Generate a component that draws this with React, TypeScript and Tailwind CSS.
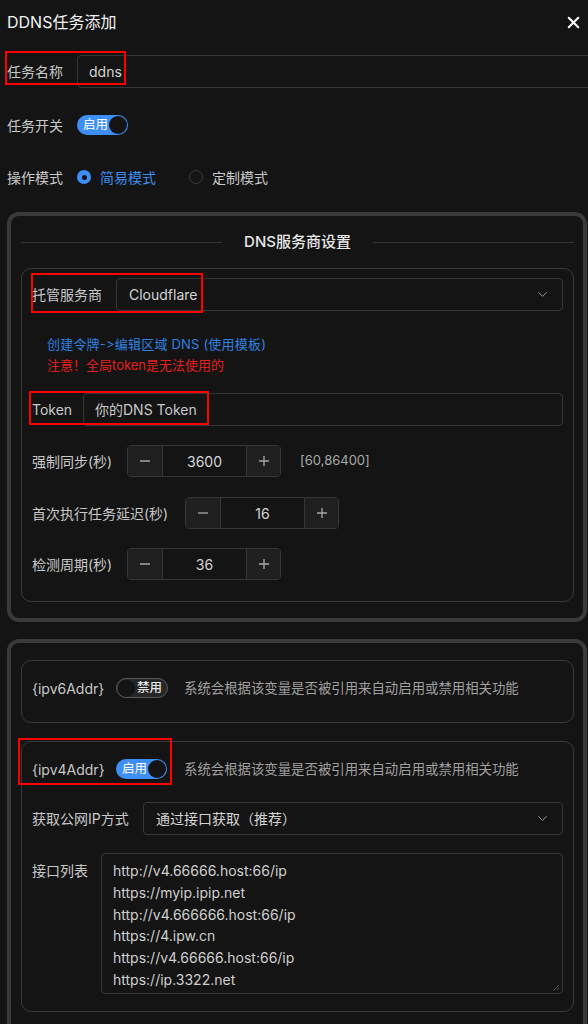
import { ChevronDown, X } from "lucide-react";

const font = "font-['Inter','Noto_Sans_CJK_SC',sans-serif]";

function Toggle({ on }: { on: boolean }) {
  if (on) {
    return (
      <div className="flex h-[20px] w-[51px] items-center justify-between rounded-full bg-[#3d8ff5] pl-[6px] pr-[1px]">
        <span className="text-[12.5px] leading-none text-white">启用</span>
        <span className="h-[18px] w-[18px] rounded-full bg-[#141414]" />
      </div>
    );
  }
  return (
    <div className="flex h-[20px] w-[52px] items-center justify-between rounded-full border border-[#5a5a5a] bg-[#262626] pl-[1px] pr-[5px]">
      <span className="h-[17px] w-[17px] rounded-full bg-[#141414]" />
      <span className="text-[12.5px] leading-none font-medium text-[#e6e6e6]">禁用</span>
    </div>
  );
}

function Stepper({ value }: { value: string }) {
  return (
    <div className="flex h-[32px] w-[154px] overflow-hidden rounded-[4px] border border-[#363636]">
      <div className="flex w-[34px] items-center justify-center bg-[#1f1f1f]">
        <svg width="12" height="12" viewBox="0 0 12 12">
          <path d="M1 6h10" stroke="#a8a8a8" strokeWidth="1.3" />
        </svg>
      </div>
      <div className="flex flex-1 items-center justify-center border-x border-[#363636] bg-[#141414] text-[14px] text-[#d4d4d4]">
        {value}
      </div>
      <div className="flex w-[33px] items-center justify-center bg-[#1f1f1f]">
        <svg width="12" height="12" viewBox="0 0 12 12">
          <path d="M1 6h10M6 1v10" stroke="#a8a8a8" strokeWidth="1.3" />
        </svg>
      </div>
    </div>
  );
}

function Select({ value }: { value: string }) {
  return (
    <div className="flex h-[33px] flex-1 items-center justify-between rounded-[4px] border border-[#363636] pl-[12px] pr-[12px]">
      <span className="text-[14px] text-[#d4d4d4]">{value}</span>
      <ChevronDown size={15} strokeWidth={1.5} color="#a0a0a0" />
    </div>
  );
}

const urls = [
  "http://v4.66666.host:66/ip",
  "https://myip.ipip.net",
  "http://v4.666666.host:66/ip",
  "https://4.ipw.cn",
  "https://v4.66666.host:66/ip",
  "https://ip.3322.net",
];

export default function App() {
  return (
    <div className={`relative h-[1024px] w-[588px] overflow-hidden bg-[#141414] text-[#c8c8c8] [font-feature-settings:'calt'_0] ${font}`}>
      {/* header */}
      <div className="flex h-[44px] items-center justify-between pl-[7px] pr-[5px]">
        <span className="text-[16px] text-[#f2f2f2]">DDNS任务添加</span>
        <X size={19} strokeWidth={2.6} color="#ffffff" />
      </div>

      <div className="mt-[11px] flex h-[33px] items-center pl-[7px]">
        <span className="w-[70px] text-[14px]">任务名称</span>
        <div className="-mr-[30px] flex h-full flex-1 items-center rounded-[4px] border border-[#363636] pl-[11px] text-[14px] text-[#d4d4d4]">
          ddns
        </div>
      </div>

      <div className="mt-[27px] flex h-[20px] items-center pl-[7px]">
        <span className="w-[70px] text-[14px]">任务开关</span>
        <Toggle on />
      </div>

      <div className="mt-[32px] flex h-[20px] items-center pl-[7px] text-[14px]">
        <span className="w-[70px]">操作模式</span>
        <span className="flex h-[14px] w-[14px] items-center justify-center rounded-full bg-[#3d8ff5]">
          <span className="h-[5px] w-[5px] rounded-full bg-[#141414]" />
        </span>
        <span className="ml-[9px] text-[#3d8ff5]">简易模式</span>
        <span className="ml-[33px] h-[14px] w-[14px] rounded-full border border-[#3a3a3a] bg-[#141414]" />
        <span className="ml-[9px]">定制模式</span>
      </div>

      {/* DNS provider panel */}
      <div className="ml-[7px] mr-[1px] mt-[25px] rounded-[12px] border-[4px] border-[#3a3a3a] pb-[16px] pl-[10px] pr-[9px]">
        <div className="flex h-[52px] items-center">
          <div className="h-px flex-1 bg-[#333333]" />
          <span className="px-[22px] text-[15px] font-medium text-[#e8e8e8]">DNS服务商设置</span>
          <div className="h-px flex-1 bg-[#333333]" />
        </div>
        <div className="rounded-[10px] border-[1.5px] border-[#3a3a3a] pb-[21px] pl-[10px] pr-[10px] pt-[9px]">
          <div className="flex items-center">
            <span className="w-[84px] text-[14px]">托管服务商</span>
            <Select value="Cloudflare" />
          </div>
          <div className="mt-[23px] pl-[15px] text-[13px] leading-[21px]">
            <div className="tracking-[0.2px] text-[#2f82e0]">创建令牌-&gt;编辑区域 DNS (使用模板)</div>
            <div className="text-[#e5201c]">注意！全局token是无法使用的</div>
          </div>
          <div className="mt-[17px] flex h-[33px] items-center">
            <span className="w-[51px] text-[14px]">Token</span>
            <div className="flex h-full flex-1 items-center rounded-[4px] border border-[#363636] pl-[11px] text-[14px] text-[#c8c8c8]">
              你的DNS Token
            </div>
          </div>
          <div className="mt-[19px] flex items-center">
            <span className="w-[95px] text-[14px]">强制同步(秒)</span>
            <Stepper value="3600" />
            <span className="ml-[19px] text-[13px] text-[#a8a8a8]">[60,86400]</span>
          </div>
          <div className="mt-[20px] flex items-center">
            <span className="w-[153px] text-[14px]">首次执行任务延迟(秒)</span>
            <Stepper value="16" />
          </div>
          <div className="mt-[19px] flex items-center">
            <span className="w-[95px] text-[14px]">检测周期(秒)</span>
            <Stepper value="36" />
          </div>
        </div>
      </div>

      {/* address panel */}
      <div className="ml-[7px] mr-[1px] mt-[17px] rounded-[12px] border-[4px] border-[#3a3a3a] pl-[10px] pr-[9px] pt-[17px]">
        <div className="flex h-[63px] items-start rounded-[10px] border-[1.5px] border-[#3a3a3a] pl-[10px] pt-[16px]">
          <div className="flex h-[22px] items-center">
            <span className="w-[84px] text-[14px]">{"{ipv6Addr}"}</span>
            <Toggle on={false} />
            <span className="ml-[16px] text-[13.4px] text-[#a0a0a0]">系统会根据该变量是否被引用来自动启用或禁用相关功能</span>
          </div>
        </div>
        <div className="mt-[18px] rounded-[10px] border-[1.5px] border-[#3a3a3a] pb-[17px] pl-[10px] pr-[10px] pt-[16px]">
          <div className="flex h-[22px] items-center">
            <span className="w-[84px] text-[14px]">{"{ipv4Addr}"}</span>
            <Toggle on />
            <span className="ml-[17px] text-[13.4px] text-[#a0a0a0]">系统会根据该变量是否被引用来自动启用或禁用相关功能</span>
          </div>
          <div className="mt-[22px] flex items-center">
            <span className="w-[111px] text-[14px]">获取公网IP方式</span>
            <Select value="通过接口获取（推荐）" />
          </div>
          <div className="mt-[18px] flex items-start">
            <span className="mt-[7px] w-[69px] text-[14px]">接口列表</span>
            <div className="relative h-[141px] flex-1 rounded-[4px] border border-[#363636] pl-[11px] pt-[6px]">
              {urls.map((u) => (
                <div key={u} className="text-[14px] leading-[21.8px] text-[#cfcfcf]">
                  {u}
                </div>
              ))}
              <svg className="absolute bottom-[2px] right-[2px]" width="7" height="7" viewBox="0 0 7 7">
                <path d="M6 1L1 6M6 4L4 6" stroke="#555555" strokeWidth="1" />
              </svg>
            </div>
          </div>
        </div>
        <div className="h-[30px]" />
      </div>

      {/* annotation boxes */}
      <div className="absolute left-[5px] top-[51px] h-[34px] w-[121px] border-2 border-[#ff0000]" />
      <div className="absolute left-[31px] top-[273px] h-[40px] w-[172px] border-2 border-[#ff0000]" />
      <div className="absolute left-[29px] top-[391px] h-[34px] w-[180px] border-2 border-[#ff0000]" />
      <div className="absolute left-[18px] top-[738px] h-[47px] w-[154px] border-2 border-[#ff0000]" />
    </div>
  );
}
